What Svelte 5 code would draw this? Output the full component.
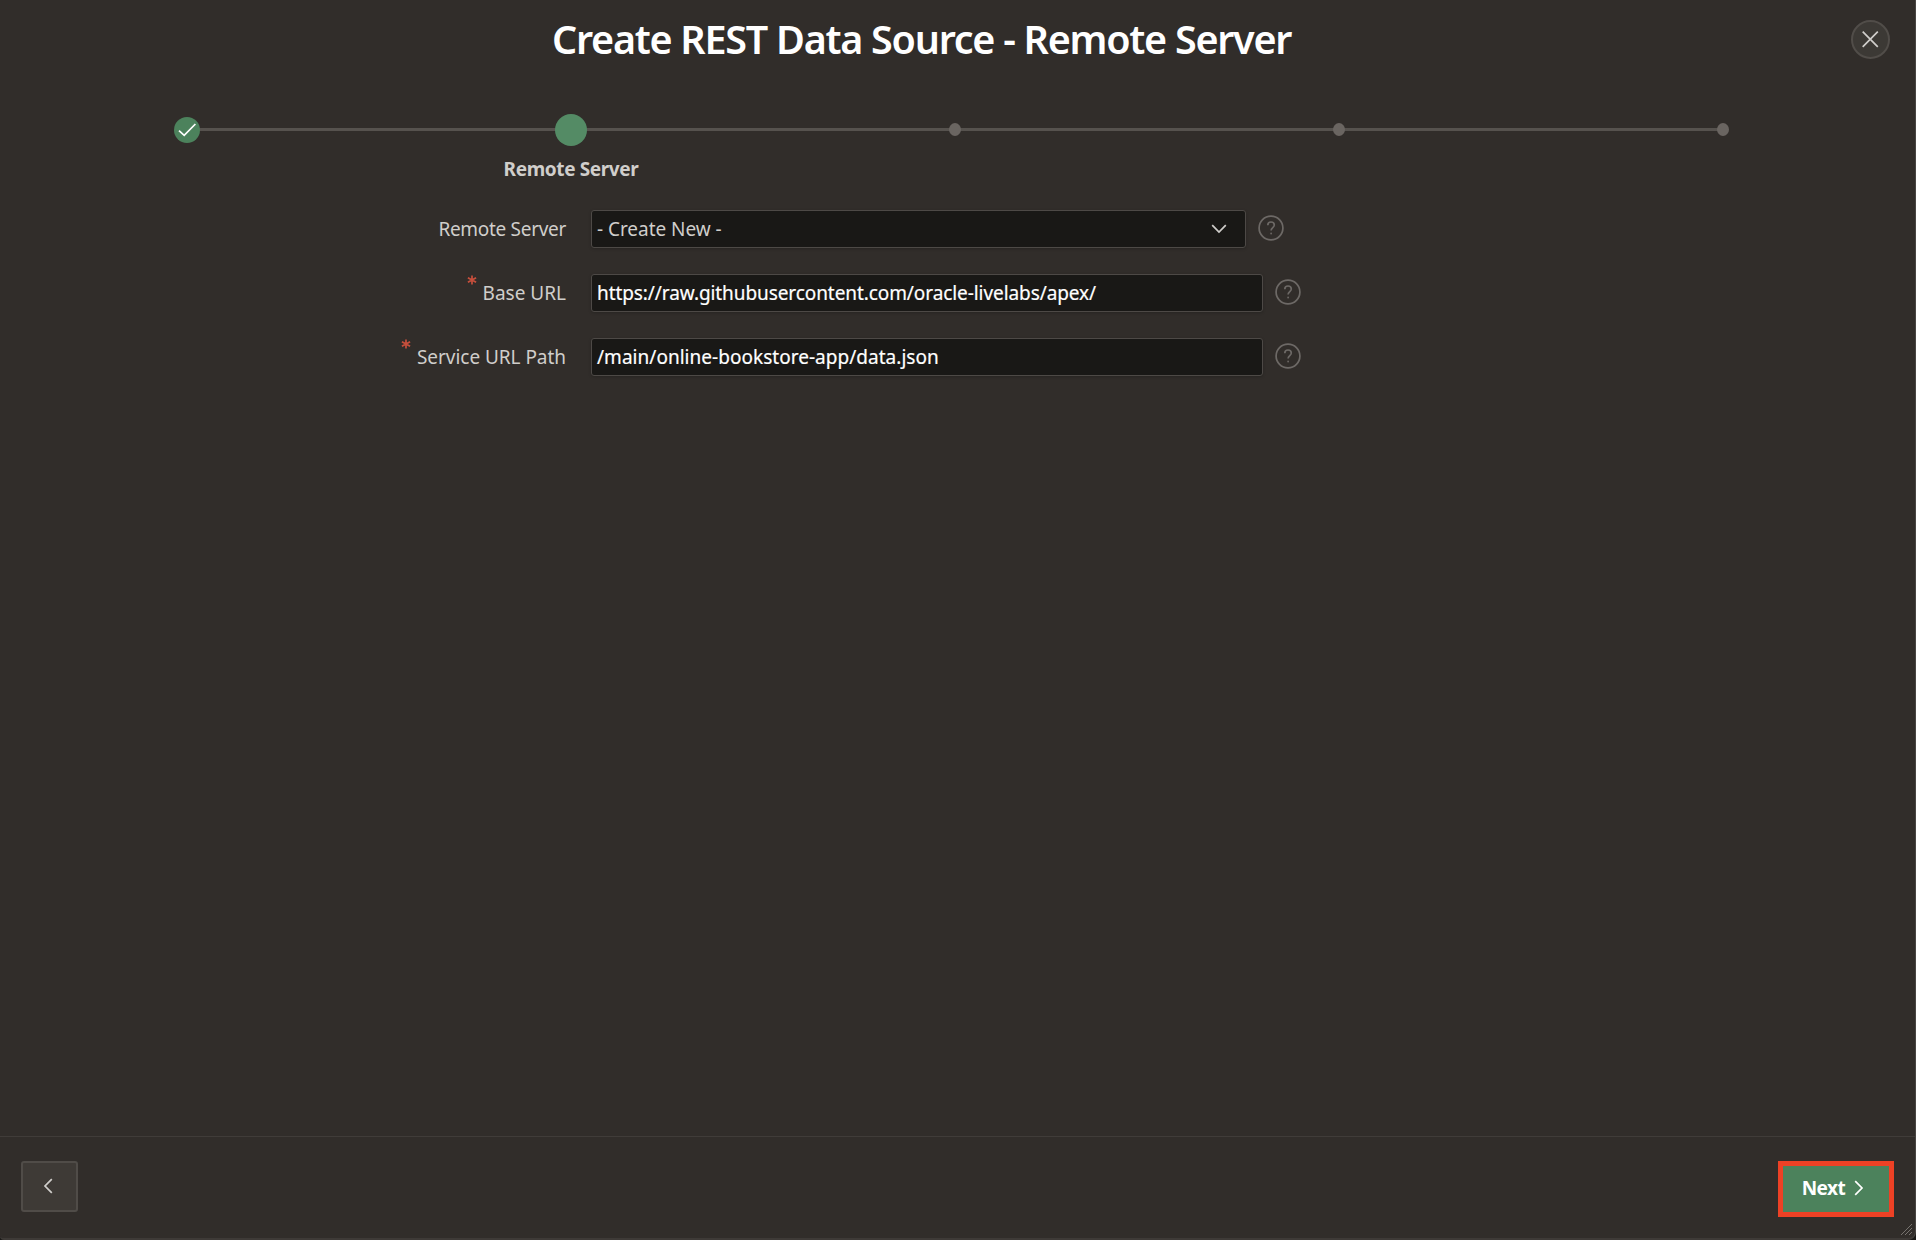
<script>
  const steps = [
    { state: 'done' },
    { state: 'current', label: 'Remote Server' },
    { state: 'todo' },
    { state: 'todo' },
    { state: 'todo' }
  ];
  const fields = [
    { id: 'server', label: 'Remote Server', value: '- Create New -', select: true },
    { id: 'base', label: 'Base URL', value: 'https://raw.githubusercontent.com/oracle-livelabs/apex/', required: true },
    { id: 'path', label: 'Service URL Path', value: '/main/online-bookstore-app/data.json', required: true }
  ];
</script>

<div class="dialog">
  <header>
    <h1>Create REST Data Source - Remote Server</h1>
    <button class="close" aria-label="Close">
      <svg width="19" height="19" viewBox="0 0 19 19"><path d="M1.7 1.7 16.8 16.8M16.8 1.7 1.7 16.8" /></svg>
    </button>
  </header>

  <ol class="steps">
    {#each steps as step}
      <li class={step.state}>
        <span class="marker">
          {#if step.state === 'done'}
            <svg width="26" height="26" viewBox="0 0 26 26"><path d="M5 13.7 10.2 18.3 21.4 7" /></svg>
          {/if}
        </span>
        {#if step.label}<span class="step-label">{step.label}</span>{/if}
      </li>
    {/each}
  </ol>

  <main>
    {#each fields as field}
      <div class="row">
        <div class="label {field.id}">
          {#if field.required}
            <svg class="star" width="10" height="10" viewBox="0 0 10 10"><path d="M5 .4V9.6M.9 2.7 9.1 7.3M9.1 2.7.9 7.3" /></svg>
          {/if}
          <span>{field.label}</span>
        </div>
        <div class="control" class:select={field.select}>
          <span class="value {field.id}">{field.value}</span>
          {#if field.select}
            <svg width="16" height="10" viewBox="0 0 16 10"><path d="M1.2 1.2 8 8 14.8 1.2" /></svg>
          {/if}
        </div>
        <svg class="help" width="26" height="26" viewBox="0 0 26 26">
          <circle cx="13" cy="13" r="11.9" />
          <path d="M9.8 10.2C9.8 8.2 11.1 7 13 7s3.3 1.2 3.3 3c0 2.5-3.2 2.6-3.2 5.4" />
          <circle class="dot" cx="13.1" cy="18.5" r=".9" />
        </svg>
      </div>
    {/each}
  </main>

  <footer>
    <button class="back" aria-label="Back">
      <svg width="10" height="16" viewBox="0 0 10 16"><path d="M8.8 1.2 2 8 8.8 14.8" /></svg>
    </button>
    <button class="next">
      <span>Next</span>
      <svg width="10" height="16" viewBox="0 0 10 16"><path d="M1.2 1.2 8 8 1.2 14.8" /></svg>
    </button>
  </footer>
  <svg class="grip" width="14" height="14" viewBox="0 0 14 14"><path d="M2 13 13 2M6 13 13 6M10 13 13 10" /></svg>
</div>

<style>
  :global(body) { background: #191816; }
  .dialog {
    position: relative;
    box-sizing: border-box;
    width: 1916px;
    height: 1240px;
    display: flex;
    flex-direction: column;
    background: #312d2a;
    border-right: 1px solid #494643;
    border-bottom: 2px solid #3e3a37;
    border-radius: 0 0 8px 4px;
    overflow: hidden;
    font-family: 'Noto Sans', sans-serif;
    font-size: 19px;
    color: #d0cecb;
  }
  svg { flex: none; fill: none; stroke: currentColor; stroke-width: 1.7; }
  button { box-sizing: border-box; padding: 0; font: inherit; color: inherit; display: flex; align-items: center; justify-content: center; }
  header { height: 80px; display: flex; align-items: flex-start; justify-content: space-between; padding: 0 25px 0 552px; }
  h1 { margin: 12px 0 0; font-size: 39.5px; line-height: 54px; font-weight: 600; color: #fff; white-space: nowrap; letter-spacing: -1.26px; }
  .close { width: 39px; height: 39px; margin-top: 20px; border: 2px solid #514d49; border-radius: 50%; background: #3c3935; }

  .steps { list-style: none; margin: 0; padding: 0; height: 130px; width: 1910px; display: flex; justify-content: center; }
  .steps li { flex: none; width: 384px; position: relative; display: flex; flex-direction: column; align-items: center; }
  .steps li + li::before { content: ''; position: absolute; width: 384px; height: 3px; top: 48px; right: 50%; background: #56524e; }
  .marker { position: relative; z-index: 1; display: flex; border-radius: 50%; background: #6a6561; width: 12px; height: 13px; margin-top: 43px; }
  .done .marker { width: 26px; height: 26px; margin-top: 37px; background: #4c825c; color: #fff; }
  .current .marker { width: 32px; height: 32px; margin-top: 34px; background: #548b65; }
  .step-label { margin-top: 10px; line-height: 26px; font-weight: 700; white-space: nowrap; letter-spacing: -0.38px; }

  main { flex: 1; display: flex; flex-direction: column; gap: 26px; }
  .row { display: flex; align-items: center; height: 38px; }
  .label { width: 566px; margin-right: 25px; display: flex; justify-content: flex-end; gap: 6px; line-height: 38px; white-space: nowrap; letter-spacing: -0.3px; }
  .label.base { letter-spacing: 0; }
  .label.path { letter-spacing: -0.04px; }
  .star { margin-top: 1px; color: #c74f3c; }
  .control { box-sizing: border-box; width: 672px; height: 38px; padding: 0 18px 0 5px; display: flex; align-items: center; justify-content: space-between; border: 1px solid #4d4946; border-radius: 3px; background: #191816; box-shadow: 0 1px 3px #0003; }
  .control.select { width: 655px; }
  .value { color: #fff; white-space: nowrap; -webkit-text-stroke: 0.2px currentColor; }
  .value.server { color: #d0cecb; letter-spacing: -0.04px; -webkit-text-stroke: 0; }
  .value.base { letter-spacing: -0.08px; }
  .value.path { letter-spacing: 0.03px; }
  .help { margin: 0 0 2px 12px; color: #6d6966; }
  .help .dot { fill: currentColor; stroke: none; }

  footer { box-sizing: border-box; height: 102px; border-top: 1px solid #403c39; padding: 24px 21px; display: flex; justify-content: space-between; align-items: flex-start; }
  .back { width: 57px; height: 51px; padding: 0 3px 1px 0; border: 2px solid #504c48; border-radius: 3px; background: #3e3a36; }
  .next { width: 116px; height: 56px; padding: 0 6px 3px 0; gap: 9px; border: 5px solid #ed4125; background: #4c825c; color: #fff; font-weight: 700; letter-spacing: -0.5px; }
  .grip { position: absolute; right: 2px; bottom: 2px; color: #77736f; stroke-width: 1; }
</style>
